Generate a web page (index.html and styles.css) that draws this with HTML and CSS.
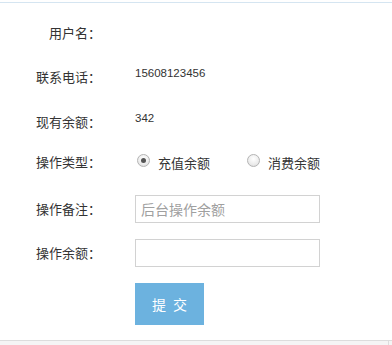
FILE: index.html
```html
<!DOCTYPE html>
<html lang="zh-CN">
<head>
<meta charset="utf-8">
<title>余额操作</title>
<link rel="stylesheet" href="styles.css">
</head>
<body>
<div class="page">
  <form class="form">
    <div class="row">
      <div class="label">用户名：</div>
      <div class="value"></div>
    </div>
    <div class="row">
      <div class="label">联系电话：</div>
      <div class="value num">15608123456</div>
    </div>
    <div class="row row-r3">
      <div class="label">现有余额：</div>
      <div class="value num">342</div>
    </div>
    <div class="row row-r4">
      <div class="label">操作类型：</div>
      <div class="radios">
        <label class="opt"><span class="radio checked"></span><span class="opt-text">充值余额</span></label>
        <label class="opt"><span class="radio"></span><span class="opt-text">消费余额</span></label>
      </div>
    </div>
    <div class="row row-r5">
      <div class="label">操作备注：</div>
      <input class="field" type="text" placeholder="后台操作余额">
    </div>
    <div class="row">
      <div class="label">操作余额：</div>
      <input class="field" type="text">
    </div>
    <div class="actions">
      <button class="submit" type="button">提&nbsp;交</button>
    </div>
  </form>
  <div class="footer"><span class="footer-edge"></span></div>
</div>
</body>
</html>
```
FILE: styles.css
```css
html, body {
  margin: 0;
  padding: 0;
  background: #ffffff;
}
body {
  font-family: "Noto Sans CJK SC", "Liberation Sans", sans-serif;
  color: #333333;
  font-size: 13px;
}
.page {
  padding-top: 2px;
  width: 392px;
  height: 345px;
  overflow: hidden;
}
.form {
  border-top: 1px solid #d5e5f1;
  padding-top: 16px;
  display: flex;
  flex-direction: column;
  gap: 16px;
}
.row {
  display: flex;
  align-items: center;
  height: 28px;
}
.row-r3 { margin-top: 1px; }
.row-r4 { margin-top: -4px; }
.row-r5 { margin-top: 3px; }
.label {
  width: 101px;
  text-align: right;
  font-size: 13px;
  line-height: 28px;
  margin-right: 34px;
  white-space: nowrap;
}
.value {
  font-size: 12px;
}
.num {
  font-family: "Liberation Sans", sans-serif;
  font-size: 11.5px;
  color: #333;
  margin-bottom: 9px;
}
.radios {
  display: flex;
  align-items: center;
  gap: 37px;
}
.opt {
  display: flex;
  align-items: center;
  gap: 8px;
  margin-left: 2px;
}
.opt + .opt { margin-left: 0; }
.radio {
  width: 11px;
  height: 11px;
  border-radius: 50%;
  border: 1px solid #b4b4b4;
  background: radial-gradient(circle at 50% 35%, #ffffff 0%, #ececec 60%, #d6d6d6 100%);
  position: relative;
  margin-top: -3px;
}
.radio.checked::after {
  content: "";
  position: absolute;
  left: 3px;
  top: 3px;
  width: 5px;
  height: 5px;
  border-radius: 50%;
  background: #555555;
}
.opt-text {
  font-size: 13px;
  color: #333;
}
.field {
  box-sizing: border-box;
  width: 185px;
  height: 28px;
  border: 1px solid #d2d2d2;
  padding: 0 5px;
  font-family: "Noto Sans CJK SC", "Liberation Sans", sans-serif;
  font-size: 14px;
  color: #333;
  outline: none;
  margin: 0;
}
.field::placeholder {
  color: #a0a0a0;
}
.actions {
  padding-left: 135px;
}
.submit {
  width: 69px;
  height: 42px;
  border: none;
  background: #6cb2df;
  color: #ffffff;
  font-family: "Noto Sans CJK SC", sans-serif;
  font-size: 14px;
  letter-spacing: 2px;
  padding: 0 0 0 2px;
  margin: 0;
}
.footer {
  margin-top: 15px;
  height: 5px;
  border-top: 1px solid #dddddd;
  background: #f5f5f5;
  position: relative;
}
.footer-edge {
  position: absolute;
  left: 388px;
  top: 0;
  width: 1px;
  height: 5px;
  background: #dddddd;
}
```
